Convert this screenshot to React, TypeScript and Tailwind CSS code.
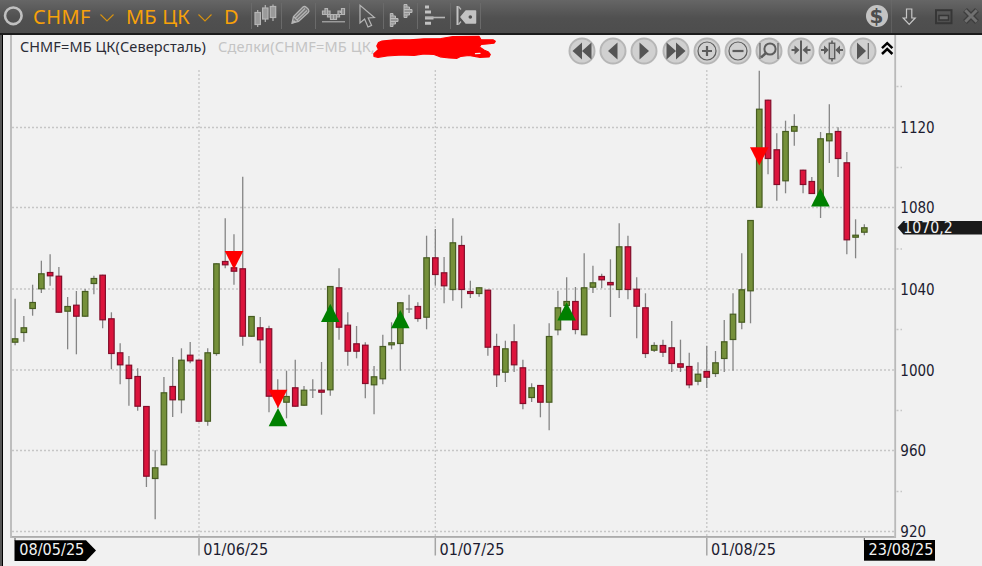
import type { ReactNode } from 'react';

type Candle = [high: number, top: number, bottom: number, low: number, up: 0 | 1];

// high, body top, body bottom, low
const CANDLES: Candle[] = [
    [298.7, 338.3, 342.7, 345.3, 1],
    [316, 327.3, 333, 341.7, 1],
    [284.7, 302, 309, 315.7, 1],
    [260.7, 273.3, 289.3, 293, 1],
    [254.3, 272, 276.3, 285.7, 0],
    [267, 275.7, 312.7, 312.7, 0],
    [297, 306, 311.7, 349.3, 1],
    [291, 304.7, 316.7, 354.3, 0],
    [289, 291, 316.7, 316.7, 1],
    [275.7, 278, 284, 294.3, 1],
    [274.7, 274.7, 320.3, 328.3, 0],
    [312.3, 318.3, 354, 369.3, 0],
    [343.3, 352.3, 365.3, 384.3, 0],
    [356, 364.7, 379, 405.7, 0],
    [368.3, 376, 406.7, 410.7, 0],
    [406, 406, 476.7, 487, 0],
    [450.3, 467.3, 479, 519.3, 1],
    [377, 392.3, 465.3, 465.3, 1],
    [357, 386, 400.3, 417, 0],
    [348.3, 359.7, 400.3, 413.3, 1],
    [342, 354.7, 361.3, 363.3, 0],
    [359.7, 359.7, 421.7, 421.7, 0],
    [348.3, 352.3, 421.7, 425.7, 1],
    [263.3, 263.3, 354, 355.7, 1],
    [218.3, 261, 265.3, 268.3, 0],
    [234.3, 267.3, 271.7, 284.7, 0],
    [176.7, 268.3, 336.7, 345.7, 0],
    [316, 316, 336.7, 336.7, 1],
    [317, 327.3, 340.3, 363.3, 0],
    [325.7, 328.3, 396.7, 412.3, 0],
    [379.3, 391, 400, 408, 0],
    [370.7, 396, 402.7, 418.3, 1],
    [359.7, 387.3, 406.7, 406.7, 0],
    [386, 389.7, 405.7, 405.7, 1],
    [379.3, 390, 390, 398, 1],
    [362, 389.7, 392.7, 414.7, 0],
    [286, 286, 390.3, 395.7, 1],
    [268.3, 287.3, 327.7, 339.7, 0],
    [312.3, 324.7, 351.7, 365.7, 0],
    [326, 343.3, 351.7, 358.3, 0],
    [342.3, 344.7, 384, 398.3, 0],
    [366, 376.3, 385.3, 414.3, 1],
    [334.7, 346, 379.3, 384.3, 1],
    [322.3, 342.3, 345.3, 349.3, 1],
    [302.3, 302.3, 344, 370.7, 1],
    [294.7, 309, 309, 313, 1],
    [302.3, 306, 319, 321.7, 0],
    [235.7, 257.3, 317.7, 329.3, 1],
    [229, 257.3, 275, 285.7, 0],
    [257, 272.3, 286.3, 303.3, 0],
    [218.3, 242.3, 290, 300.7, 1],
    [235.7, 245, 290, 308.3, 0],
    [280.7, 291, 294, 298, 0],
    [287.3, 287.3, 294, 296.7, 1],
    [289.7, 289.7, 347.7, 355.7, 0],
    [333.7, 346, 375.3, 387, 0],
    [340.7, 348.3, 372.7, 382, 1],
    [324.3, 341.3, 365.3, 372, 0],
    [359.7, 367.3, 404, 409.3, 0],
    [383.3, 387.3, 398, 402, 1],
    [385, 385, 402.7, 417.3, 0],
    [323.3, 336, 402.7, 430.3, 1],
    [290.7, 307.3, 330.3, 335.3, 1],
    [277.3, 301, 306, 310, 1],
    [287, 301, 330, 334.3, 0],
    [253.3, 287.3, 335.3, 335.3, 1],
    [265.7, 282.3, 287.7, 293, 1],
    [273.7, 276, 280.3, 288.3, 0],
    [259.3, 282, 285.3, 317, 0],
    [223.3, 246.3, 290, 298, 1],
    [235.7, 246.3, 290, 299.3, 0],
    [277.3, 288.7, 306.7, 338.3, 0],
    [293.3, 307.3, 354, 358, 0],
    [342.3, 345, 350.7, 352, 1],
    [339.7, 345, 352.7, 357, 0],
    [321, 347.3, 364, 372, 0],
    [339.7, 363.3, 367.7, 372, 0],
    [352.7, 366, 385.3, 388.3, 0],
    [362.3, 373.7, 381.7, 385.3, 1],
    [345.7, 371, 377.7, 388, 0],
    [351, 362.3, 374, 377, 1],
    [320, 341.3, 359, 372, 1],
    [293.3, 313.7, 340, 370.7, 1],
    [253.3, 289.3, 322.7, 329.3, 1],
    [220, 220, 291.3, 323.3, 1],
    [70.7, 108.7, 207.7, 207.7, 1],
    [99.7, 99.7, 159, 174.3, 0],
    [133.3, 149.3, 185, 200.7, 0],
    [120.7, 131, 181.3, 193.3, 1],
    [114.3, 126, 131.7, 145.7, 1],
    [169.7, 169.7, 185, 193.3, 0],
    [177, 181, 194, 194, 0],
    [132, 138.3, 200, 218, 1],
    [104.3, 133.3, 141.3, 163, 1],
    [127.3, 131, 159, 177, 0],
    [152, 162.3, 240.3, 254.3, 0],
    [219.3, 234.7, 237.7, 258.3, 1],
    [224.3, 227.3, 232.7, 235.3, 1],
];

const STEP = 8.755;
const candleX = (i: number) => 15.1 + i * STEP;

const PRICES = [
    { label: '1120', y: 127.5 },
    { label: '1080', y: 207.5 },
    { label: '1040', y: 289 },
    { label: '1000', y: 370 },
    { label: '960', y: 450.5 },
    { label: '920', y: 531.5 },
];

const MINOR_TICKS = [86.5, 167.5, 249, 329.5, 410.5, 491.5];

const MONTHS = [
    { label: '01/06/25', x: 199 },
    { label: '01/07/25', x: 435.3 },
    { label: '01/08/25', x: 706.8 },
];

const SELLS = [
    { x: 234, y: 251 },
    { x: 278, y: 389.8 },
    { x: 759.3, y: 147.3 },
];

const BUYS = [
    { x: 278, y: 408 },
    { x: 330.3, y: 303.7 },
    { x: 400.3, y: 310 },
    { x: 566.6, y: 302.3 },
    { x: 820.4, y: 188.3 },
];

function Chart() {
    return (
        <svg
            width="982"
            height="531"
            viewBox="0 35 982 531"
            className="block"
            fontFamily='"DejaVu Sans Condensed", "Noto Sans", sans-serif'
            fontSize="15.2"
            fill="#1c1c30"
        >
            {/* Grid */}
            <g stroke="#c6c6c6" strokeWidth="1.3" strokeDasharray="2 2">
                {PRICES.map((p) => (
                    <line key={p.label} x1="12" x2="894" y1={p.y} y2={p.y} />
                ))}
                {MONTHS.map((m) => (
                    <line key={m.label} x1={m.x} x2={m.x} y1="70" y2="536" />
                ))}
                {MINOR_TICKS.map((y) => (
                    <line key={y} x1="896.5" x2="902" y1={y} y2={y} />
                ))}
            </g>

            {/* Frame */}
            <path d="M11 35V537.2H895.2V35" fill="none" stroke="#b9b9b9" strokeWidth="1.8" />
            <path d="M12 536.6H894" stroke="#a2a2a2" strokeWidth="0.8" />

            {/* Candles */}
            {CANDLES.map(([high, top, bottom, low, up], i) => {
                const x = candleX(i);
                const height = bottom - top;
                return (
                    <g key={i}>
                        <line x1={x} x2={x} y1={high} y2={low} stroke="#858585" strokeWidth="1.3" />
                        {height < 1 ? (
                            <line x1={x - 3.2} x2={x + 3.2} y1={top} y2={top} stroke="#777777" strokeWidth="1.2" />
                        ) : (
                            <rect
                                x={x - 2.75}
                                y={top + 0.5}
                                width="5.5"
                                height={height - 1}
                                fill={up ? '#75903a' : '#dc143c'}
                                stroke={up ? '#465c20' : '#830d2a'}
                                strokeWidth="1.2"
                            />
                        )}
                    </g>
                );
            })}

            {/* Deals */}
            {SELLS.map((s) => (
                <path key={s.x} d={`M${s.x - 9.3} ${s.y}h18.6L${s.x} ${s.y + 18.2}z`} fill="#ff0000" />
            ))}
            {BUYS.map((b) => (
                <path key={b.x} d={`M${b.x - 9.3} ${b.y + 18.2}h18.6L${b.x} ${b.y}z`} fill="#008000" />
            ))}

            {/* Price axis */}
            {PRICES.map((p) => (
                <text
                    key={p.label}
                    x="900.3"
                    y={p.y + 5.5}
                    textLength={p.label.length * 8.6}
                    lengthAdjust="spacingAndGlyphs"
                >
                    {p.label}
                </text>
            ))}
            <path d="M897.5 227.6L903.5 221H982V234.5H903.5z" fill="#1a1a1a" />
            <text x="903.3" y="233.3" textLength="49.5" lengthAdjust="spacingAndGlyphs" fill="#f1f1f1">
                1070,2
            </text>

            {/* Time axis */}
            {MONTHS.map((m) => (
                <g key={m.label}>
                    <line x1={m.x} x2={m.x} y1="538" y2="555.5" stroke="#a5a5a5" strokeWidth="1.5" />
                    <text x={m.x + 4.2} y="554.8" textLength="65" lengthAdjust="spacingAndGlyphs">
                        {m.label}
                    </text>
                </g>
            ))}
            <path d="M15 538V541M864.3 538V541" stroke="#555555" />
            <path d="M14.5 540.3H86L96 550.5L86 561H14.5z" fill="#000000" />
            <text x="19.3" y="554.8" textLength="65" lengthAdjust="spacingAndGlyphs" fill="#f2f2f2">
                08/05/25
            </text>
            <rect x="864" y="540" width="71" height="20.7" fill="#000000" />
            <text x="868.5" y="554.8" textLength="65" lengthAdjust="spacingAndGlyphs" fill="#f2f2f2">
                23/08/25
            </text>
        </svg>
    );
}

const NAV_ICONS: { name: string; icon: ReactNode }[] = [
    { name: 'first', icon: <path d="M4.5 14L14 5.5V22.5zM14 14L23.5 5.5V22.5z" fill="#555555" /> },
    { name: 'prev', icon: <path d="M9 14L18.5 5.5V22.5z" fill="#555555" /> },
    { name: 'next', icon: <path d="M19 14L9.5 5.5V22.5z" fill="#555555" /> },
    { name: 'last', icon: <path d="M4.5 5.5V22.5L14 14zM14 5.5V22.5L23.5 14z" fill="#555555" /> },
    {
        name: 'zoom in',
        icon: (
            <g fill="none" stroke="#5c5c5c">
                <circle cx="14" cy="14" r="9" strokeWidth="1.2" />
                <path d="M9 14H19M14 9V19" strokeWidth="2.2" />
            </g>
        ),
    },
    {
        name: 'zoom out',
        icon: (
            <g fill="none" stroke="#5c5c5c">
                <circle cx="14" cy="14" r="9" strokeWidth="1.2" />
                <path d="M8.5 14H19.5" strokeWidth="2.2" />
            </g>
        ),
    },
    {
        name: 'zoom range',
        icon: (
            <g fill="none" stroke="#5c5c5c">
                <path d="M5 6V22M23 6V22" strokeWidth="1.2" />
                <circle cx="15" cy="12" r="5.6" strokeWidth="2" />
                <path d="M11 16L6 20.5" strokeWidth="2.4" />
            </g>
        ),
    },
    {
        name: 'compress',
        icon: (
            <g stroke="#5c5c5c" fill="#5c5c5c">
                <path d="M14 3.5V24.5" strokeWidth="2" />
                <path d="M4.5 13H9M19 13H23.5" strokeWidth="2" />
                <path d="M7.5 8.5L12.5 13L7.5 17.5zM20.5 8.5L15.5 13L20.5 17.5z" stroke="none" />
            </g>
        ),
    },
    {
        name: 'candle width',
        icon: (
            <g stroke="#5c5c5c" fill="#5c5c5c">
                <path d="M14 3.5V6.5M14 21.5V24.5" strokeWidth="1.6" />
                <rect x="11.3" y="6.2" width="5.4" height="15.5" fill="#bdbdbd" strokeWidth="1.4" />
                <path d="M3 13H7M21 13H25" strokeWidth="2" />
                <path d="M6 8.5L10.7 13L6 17.5zM22 8.5L17.3 13L22 17.5z" stroke="none" />
            </g>
        ),
    },
    {
        name: 'to end',
        icon: (
            <g>
                <path d="M8 5.5V22.5L17 14z" fill="#555555" />
                <path d="M19.3 6V22" stroke="#5c5c5c" strokeWidth="1.2" />
            </g>
        ),
    },
];

function ChartOverlay() {
    return (
        <div className="absolute inset-x-0 top-0 flex h-8 items-start">
            <span className="ml-5 w-[198px] whitespace-nowrap text-[14.5px] leading-[22px] tracking-[0.1px] text-[#2c2c36]">
                CHMF=МБ ЦК(Северсталь)
            </span>
            <span className="w-[155px] whitespace-nowrap text-[14.5px] leading-[22px] tracking-[0.16px] text-[#c4c4c4]">
                Сделки(CHMF=МБ ЦК,
            </span>
            <svg width="126" height="26" viewBox="372 34 126 26" className="-ml-px">
                <path
                    d="M378.5 41.5L382 40L394 38.8L410 38.8L424 37.8L441 37.5L453 35.5L479 35.3L481 38.8L493 38.8L495.3 40.3L494 42.2L487 43L481 43.5L479.5 46L484 49L488.5 51L490.3 53.5L489 56L480 56.3L469 54.5L461 55.3L457 57.3L449 57L440 55.8L434 53.5L424 53L414 54.5L402 54L387 55L378 56.3L374 55.5L373.8 52.8L378.5 48.5L376.8 45z"
                    fill="#ff0000"
                    stroke="#ff0000"
                    strokeWidth="1.2"
                    strokeLinejoin="round"
                />
                <path d="M475.5 52.6L480 52.3" stroke="#f1f1f1" strokeWidth="1.3" strokeLinecap="round" />
            </svg>
            <div className="ml-auto mr-[86px] flex items-start">
                {NAV_ICONS.map(({ name, icon }) => (
                    <button key={name} aria-label={name} className="mt-[2px] flex w-[31.3px] justify-center">
                        <svg width="28" height="28" viewBox="0 0 28 28">
                            <circle cx="14" cy="14" r="12.5" fill="#d0d0d0" stroke="#b6b6b6" strokeWidth="2" />
                            {icon}
                        </svg>
                    </button>
                ))}
                <svg width="17" height="17" viewBox="0 0 17 17" className="mt-[5px]">
                    <path d="M3 8.2L8.2 3.2L13.4 8.2M3 14L8.2 9L13.4 14" fill="none" stroke="#000000" strokeWidth="2.5" />
                </svg>
            </div>
        </div>
    );
}

interface ToolProps {
    width: string;
    box: string;
    children: ReactNode;
}

function Tool({ width, box, children }: ToolProps) {
    return (
        <button className={`${width} h-[33px] flex-none`}>
            <svg className="block h-full w-full" viewBox={box} fill="none" stroke="#b5b5b5">
                <path d={`M${box.split(' ')[0]}.5 3V29`} stroke="#6a6a6a" />
                {children}
            </svg>
        </button>
    );
}

function Chevron() {
    return (
        <svg width="16" height="10" viewBox="0 0 16 10" className="mt-[3px]">
            <path d="M1.5 1.5L8 8L14.5 1.5" fill="none" stroke="#d9930f" strokeWidth="1.1" />
        </svg>
    );
}

function Header() {
    return (
        <header className="flex h-[33px] items-center bg-linear-to-b from-[#666666] via-[#505050] via-55% to-[#4d4d4d] text-[20px] leading-none text-[#f7a109]">
            <svg width="33" height="33" viewBox="0 0 33 33" className="flex-none">
                <circle cx="13.3" cy="15.8" r="8.3" fill="none" stroke="#c0c0c0" strokeWidth="2.6" />
            </svg>
            <span className="w-[66px] tracking-[0.5px]">CHMF</span>
            <Chevron />
            <span className="ml-[11px] w-[71px] whitespace-nowrap tracking-[0.2px]">МБ ЦК</span>
            <Chevron />
            <span className="ml-[11px] w-[27px]">D</span>

            {/* Candle style */}
            <Tool width="w-[30px]" box="251 0 30 33">
                <path d="M257.7 10V27M265.3 5V22M273 4.5V21" strokeWidth="1.2" />
                <g fill="#9a9a9a" strokeWidth="1.2">
                    <rect x="255" y="12.5" width="5.4" height="12" />
                    <rect x="262.6" y="8" width="5.4" height="11" />
                    <rect x="270.3" y="6.5" width="5.4" height="11" />
                </g>
            </Tool>

            {/* Drawing */}
            <Tool width="w-[34px]" box="281 0 34 33">
                <path
                    d="M292 23.2L293.5 16.5L303 7Q304.5 5.7 306.5 7.5L308.5 9.5Q309.5 11 308.2 12.5L298.5 21.5z"
                    fill="#777777"
                    strokeWidth="1.3"
                />
                <path d="M293.5 16.5L298.5 21.5M295.5 18L305 8.5M297 20L307 10.5" strokeWidth="1.1" />
                <path d="M292 23.2L294 20.5L295.5 22z" fill="#c5c5c5" />
            </Tool>

            {/* Indicator */}
            <Tool width="w-[34px]" box="315 0 34 33">
                <path d="M322 21.8H345" strokeWidth="1.1" />
                <path
                    d="M322.5 14.5V11H325V8.5H327.5V11H330V14.5M338 14.5V11H340.5V13M341.5 14.5V8.5H344.5V14.5M322 14.5H345M327.5 14.5V17H330.5V19.5H336.5V17H339.5V14.5M333.5 14.5V19.5M330.5 14.5V17M336.5 14.5V17M325 11V14.5M327.5 11V14.5"
                    fill="#8a8a8a"
                    strokeWidth="1.2"
                />
            </Tool>

            {/* Cursor */}
            <Tool width="w-[34px]" box="349 0 34 33">
                <path d="M360 5.2V23L364.6 19L368 27L371.6 25.4L368.2 18L374.4 17.5z" strokeWidth="1.2" />
            </Tool>

            {/* Market profile */}
            <Tool width="w-[34px]" box="383 0 34 33">
                <g fill="#959595" stroke="#bcbcbc" strokeWidth="1">
                    <path d="M390.3 13.5H393V16H395.5V18.5H398V21.5H395.5V24H393V26.5H390.3zM390.3 16H393M390.3 18.5H395.5M390.3 21.5H395.5M390.3 24H393" />
                    <path d="M404 4.5H407V7H409.5V9.5H412V12.5H409.5V15H407V17.5H404zM404 7H407M404 9.5H409.5M404 12.5H409.5M404 15H407" />
                </g>
            </Tool>

            {/* Volume histogram */}
            <Tool width="w-[33px]" box="417 0 33 33">
                <path d="M425 7H429M425 12H431M425 18H433.5M425 23.3H431" strokeWidth="3" stroke="#c2c2c2" />
                <path d="M425 17.5H445" strokeWidth="1.6" />
            </Tool>

            {/* Price tag */}
            <Tool width="w-[31px]" box="450 0 31 33">
                <path d="M457.5 6V25" strokeWidth="2" stroke="#c2c2c2" />
                <path d="M458.5 6.5L461 9.5M458.5 24.5L461 21.5" strokeWidth="1.2" />
                <path d="M461 17L466 11H475.5V23H466z" fill="#c2c2c2" stroke="#c2c2c2" strokeWidth="1.5" strokeLinejoin="round" />
                <circle cx="470.3" cy="17" r="1.8" fill="#4f4f4f" stroke="none" />
                <path d="M480.5 3V29" stroke="#6a6a6a" />
            </Tool>

            {/* Window controls */}
            <div className="ml-auto flex h-full items-center">
                <button className="flex h-full w-[30px] items-center justify-center border-r border-[#6b6b6b]/60">
                    <span className="mb-px flex size-[22px] items-center justify-center rounded-full bg-[#c3c3c3] font-['DejaVu_Sans'] text-[20px] font-bold leading-none text-[#4d4d4d]">
                        $
                    </span>
                </button>
                <svg width="90" height="33" viewBox="892 0 90 33" fill="none">
                    <path d="M906.5 9H911.8V18H915.2L909.2 24.3L903.2 18H906.5z" stroke="#c7c7c7" strokeWidth="1.2" />
                    <rect x="936" y="10.2" width="15.5" height="13" stroke="#363636" strokeWidth="2" />
                    <rect x="939" y="15.5" width="9.5" height="4.5" fill="#686868" stroke="#363636" strokeWidth="1.5" />
                    <path d="M965 10L977 22M977 10L965 22" stroke="#3d3d3d" strokeWidth="5.5" />
                    <path d="M965.3 10.3L976.7 21.7M976.7 10.3L965.3 21.7" stroke="#707070" strokeWidth="3" />
                </svg>
            </div>
        </header>
    );
}

export default function App() {
    return (
        <div className="h-[566px] w-[982px] overflow-hidden bg-[#4d4d4d] font-['Noto_Sans','Open_Sans',sans-serif]">
            <Header />
            <main className="relative h-[533px] border-t-2 border-[#1b1b1b] bg-[#f1f1f1]">
                <Chart />
                <ChartOverlay />
                {/* Window edge */}
                <div className="absolute inset-y-0 left-0 w-[3px] border-r border-black bg-[#555555]" />
            </main>
        </div>
    );
}
